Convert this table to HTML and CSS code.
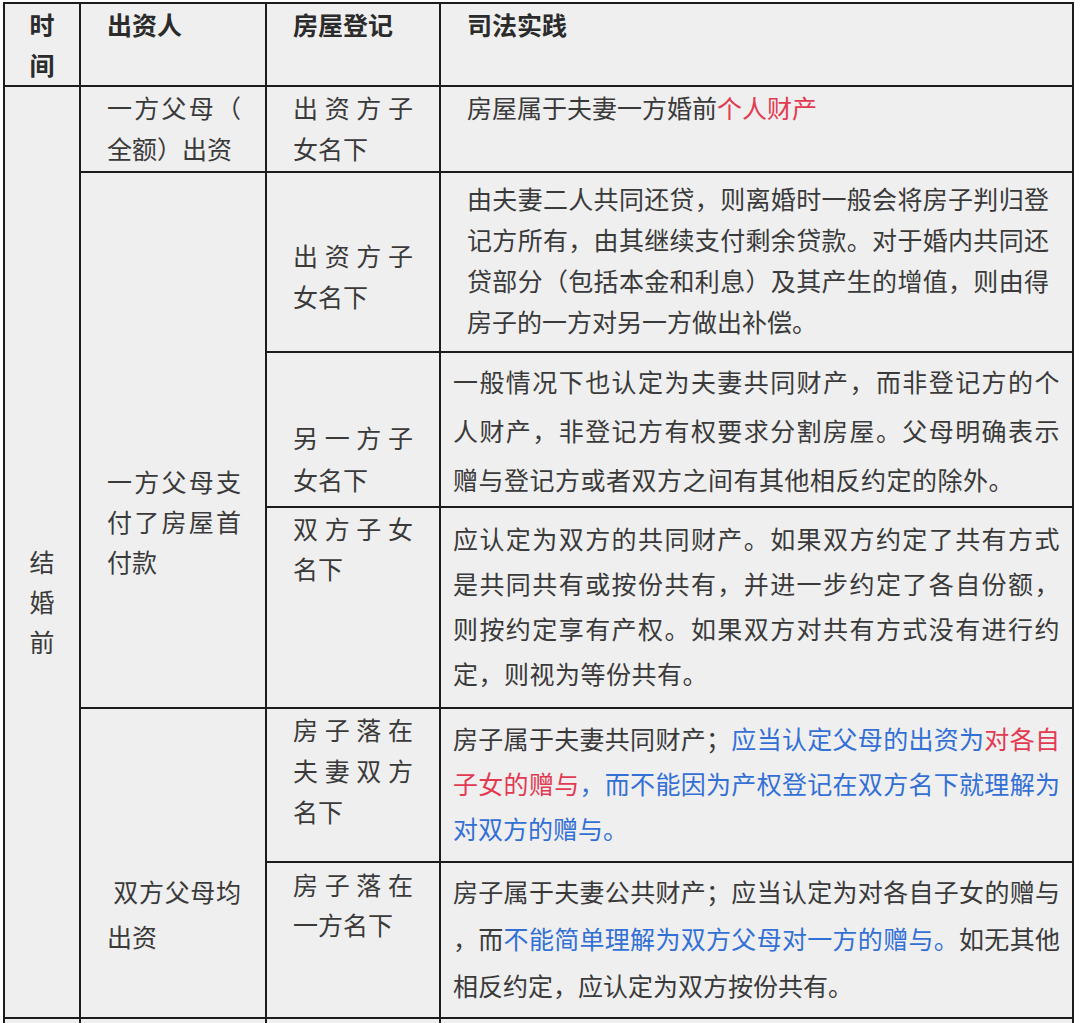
FILE: index.html
```html
<!DOCTYPE html>
<html lang="zh-CN">
<head>
<meta charset="utf-8">
<title>婚前父母出资购房</title>
<link rel="stylesheet" href="styles.css">
</head>
<body>
<div class="table">
  <div class="c h col-time r1">时间</div>
  <div class="c h col-payer r1">出资人</div>
  <div class="c h col-reg r1">房屋登记</div>
  <div class="c h col-prac ind r1">司法实践</div>

  <div class="c col-time time-body">结婚前</div>

  <div class="c col-payer payer1">一方父母（全额）出资</div>
  <div class="c col-reg reg1">出资方子女名下</div>
  <div class="c col-prac ind prac1">房屋属于夫妻一方婚前<span class="red">个人财产</span></div>

  <div class="c col-payer payer2">一方父母支付了房屋首付款</div>
  <div class="c col-reg reg2">出资方子女名下</div>
  <div class="c col-prac ind prac2">由夫妻二人共同还贷，则离婚时一般会将房子判归登记方所有，由其继续支付剩余贷款。对于婚内共同还贷部分（包括本金和利息）及其产生的增值，则由得房子的一方对另一方做出补偿。</div>

  <div class="c col-reg reg3">另一方子女名下</div>
  <div class="c col-prac prac3">一般情况下也认定为夫妻共同财产，而非登记方的个人财产，非登记方有权要求分割房屋。父母明确表示赠与登记方或者双方之间有其他相反约定的除外。</div>

  <div class="c col-reg reg4">双方子女名下</div>
  <div class="c col-prac prac4">应认定为双方的共同财产。如果双方约定了共有方式是共同共有或按份共有，并进一步约定了各自份额，则按约定享有产权。如果双方对共有方式没有进行约定，则视为等份共有。</div>

  <div class="c col-payer payer3">&nbsp;双方父母均出资</div>
  <div class="c col-reg reg5">房子落在夫妻双方名下</div>
  <div class="c col-prac prac5"><span>房子属于夫妻共同财产；</span><span class="blue">应当认定父母的出资为</span><span class="red">对各自</span><span class="red">子女的赠与</span><span class="blue">，而不能因为产权登记在双方名下就理解为</span><span class="blue">对双方的赠与。</span></div>

  <div class="c col-reg reg6">房子落在一方名下</div>
  <div class="c col-prac prac6"><span>房子属于夫妻公共财产；应当认定为对各自子女的赠与</span><span>，而</span><span class="blue">不能简单理解为双方父母对一方的赠与。</span><span>如无其他</span><span>相反约定，应认定为双方按份共有。</span></div>

  <div class="c col-time r8"></div>
  <div class="c col-payer r8"></div>
  <div class="c col-reg r8"></div>
  <div class="c col-prac r8"></div>
</div>
</body>
</html>
```

FILE: styles.css
```css
html, body {
  background: #ffffff;
}

body {
  margin: 2px 0 0 3px;
  font-family: "Noto Sans CJK SC", "Noto Sans", sans-serif;
  font-size: 25px;
  color: #3a3a3a;
}

.table {
  display: grid;
  width: max-content;
  grid-template-columns: 74px 184px 172px 631px;
  grid-template-rows: 81px 84px 178px 153px 199px 152px 154px 60px;
  gap: 2px;
  padding: 2px;
  background: #1c1c1c;
}

.c {
  background: #efefef;
  text-align: justify;
  line-break: anywhere;
  box-sizing: border-box;
  line-height: 42px;
}

/* columns */
.col-time {
  grid-column: 1;
  padding: 0 22px;
  text-align: center;
}

.col-payer {
  grid-column: 2;
  padding-left: 26px;
  padding-right: 24px;
}

.col-reg {
  grid-column: 3;
  padding-left: 26px;
  padding-right: 26px;
}

.col-prac {
  grid-column: 4;
  padding-left: 12px;
  padding-right: 12px;
}

.col-prac.ind {
  padding-left: 26px;
  padding-right: 23px;
}

/* header */
.h {
  font-weight: 700;
  color: #2b2b2b;
  line-height: 40px;
}

.r1 { grid-row: 1; }
.r8 { grid-row: 8; }

.time-body {
  grid-row: 2 / 8;
  padding-top: 454px;
  line-height: 40px;
}

/* row 1 */
.payer1, .reg1, .prac1 {
  grid-row: 2;
  padding-top: 0;
  line-height: 41px;
}

/* one parent pays down payment */
.payer2 {
  grid-row: 3 / 6;
  padding-top: 288px;
  line-height: 40px;
}

.reg2 {
  grid-row: 3;
  padding-top: 62px;
  line-height: 41px;
}

.prac2 {
  grid-row: 3;
  padding-top: 5px;
  line-height: 41px;
}

.reg3 {
  grid-row: 4;
  padding-top: 63px;
  line-height: 42px;
}

.prac3 {
  grid-row: 4;
  padding-top: 4px;
  line-height: 49px;
  letter-spacing: 0.5px;
}

.reg4 {
  grid-row: 5;
  padding-top: 0;
  line-height: 40px;
}

.prac4 {
  grid-row: 5;
  padding-top: 8px;
  line-height: 45px;
  letter-spacing: 0.5px;
}

/* both parents pay */
.payer3 {
  grid-row: 6 / 8;
  padding-top: 160px;
  line-height: 45px;
}

.reg5 {
  grid-row: 6;
  padding-top: 0;
  line-height: 41px;
}

.prac5 {
  grid-row: 6;
  padding-top: 7px;
  line-height: 45px;
}

.reg6 {
  grid-row: 7;
  padding-top: 1px;
  line-height: 40px;
}

.prac6 {
  grid-row: 7;
  padding-top: 5px;
  line-height: 47px;
}

.red {
  color: #e23a52;
}

.blue {
  color: #3370d6;
}
```
